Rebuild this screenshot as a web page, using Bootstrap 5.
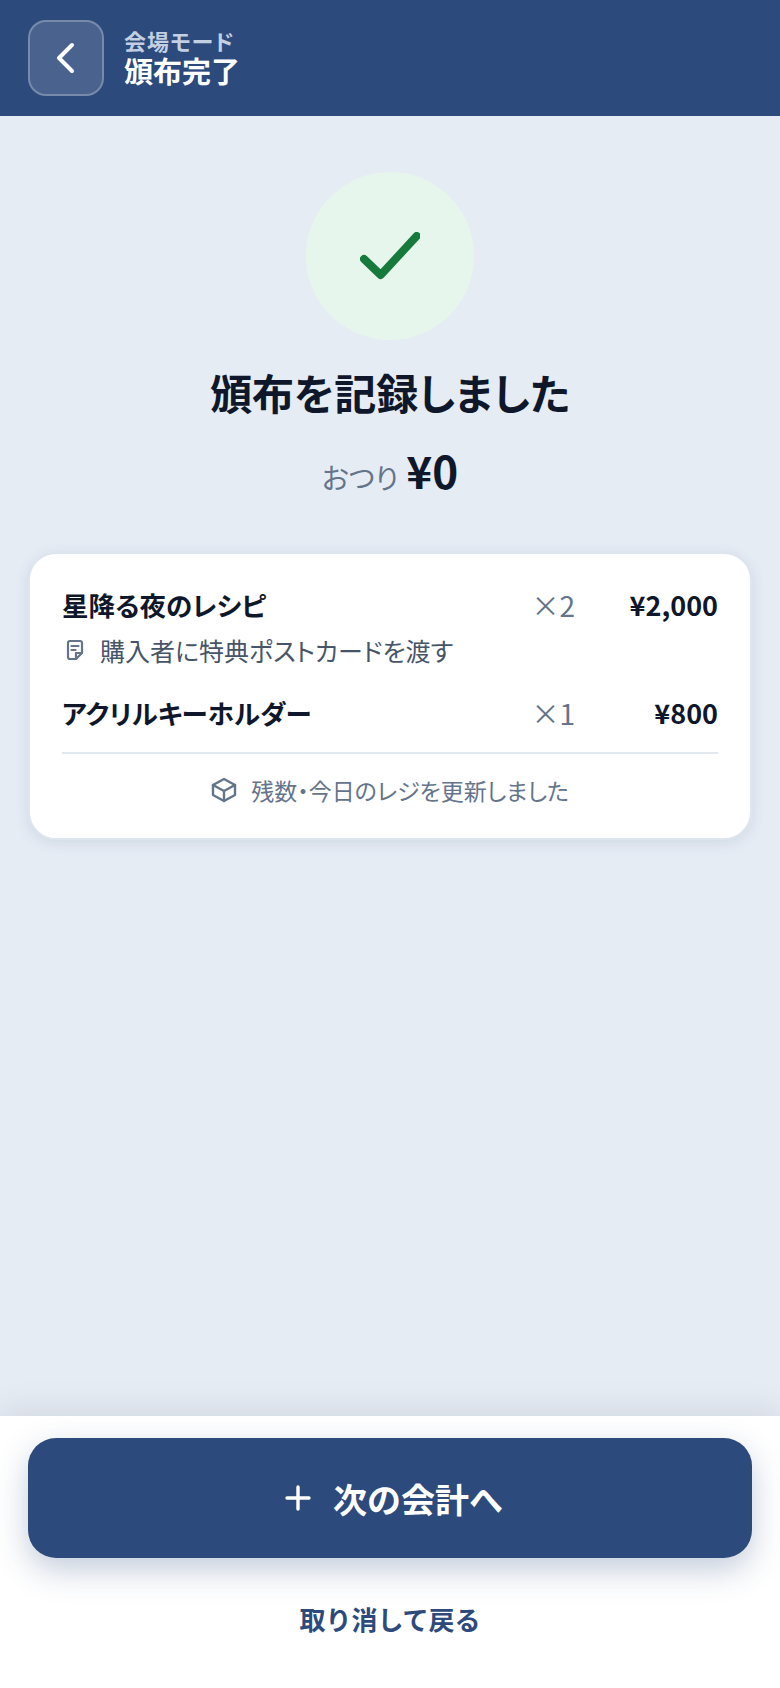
<!DOCTYPE html>
<html lang="ja">
<head>
  <meta charset="UTF-8">
  <meta name="viewport" content="width=device-width, initial-scale=1.0">
  <title>頒布完了</title>
  <link href="https://cdn.jsdelivr.net/npm/bootstrap@5.3.0/dist/css/bootstrap.min.css" rel="stylesheet">
  <style>
    body {
      font-family: "Noto Sans CJK JP", "Noto Sans", sans-serif;
      font-feature-settings: "palt";
      background-color: #e6ecf4;
      color: #0f172a;
      height: 1688px;
    }
    .top-bar {
      height: 116px;
      padding: 0 28px;
      background-color: #2c4a7c;
      gap: 20px;
    }
    .back-btn {
      width: 76px;
      height: 76px;
      padding: 0;
      border: 2px solid rgba(255, 255, 255, .25);
      border-radius: 18px;
      background-color: rgba(255, 255, 255, .14);
    }
    .bar-mode {
      margin-top: -2px;
      font-size: 22px;
      font-weight: 700;
      line-height: 26px;
      color: #c3cfe2;
      letter-spacing: 1px;
    }
    .bar-title {
      font-size: 29px;
      font-weight: 700;
      line-height: 34px;
      color: #fff;
    }
    .done-main {
      padding: 56px 28px 0;
    }
    .done-circle {
      width: 168px;
      height: 168px;
      background-color: #e6f6ec;
    }
    .done-title {
      margin: 22px 0 0;
      font-size: 42px;
      font-weight: 700;
      line-height: 60px;
    }
    .change-line {
      margin-top: 15px;
      height: 64px;
      gap: 8px;
    }
    .change-label {
      font-size: 28px;
      color: #64748b;
    }
    .change-value {
      font-size: 44px;
      font-weight: 700;
    }
    .sale-card {
      margin-top: 51px;
      padding: 31px 32px 0;
      height: 288px;
      border: 2px solid #dfe5ee;
      border-radius: 28px;
      box-shadow: 0 3px 14px rgba(44, 74, 124, .12);
    }
    .sale-name {
      font-size: 26.5px;
      font-weight: 700;
      line-height: 40px;
    }
    .sale-qty {
      width: 60px;
      font-size: 28px;
      line-height: 40px;
      text-align: right;
      color: #64748b;
    }
    .sale-price {
      width: 143px;
      font-size: 27px;
      font-weight: 700;
      line-height: 40px;
      text-align: right;
    }
    .sale-note {
      margin-top: 5px;
      margin-bottom: 23px;
      font-size: 25px;
      line-height: 40px;
      color: #475569;
      gap: 14px;
    }
    .sale-rule {
      margin: 19px 0 0;
      border-top: 2px solid #e2e8f0;
      opacity: 1;
    }
    .sale-foot {
      height: 72px;
      font-size: 23px;
      color: #64748b;
      gap: 14px;
    }
    .action-bar {
      height: 272px;
      padding: 22px 28px 0;
      background-color: #fff;
      box-shadow: 0 -4px 32px rgba(15, 23, 42, .1);
    }
    .next-btn {
      width: 100%;
      height: 120px;
      padding-left: 14px;
      border: 0;
      border-radius: 28px;
      background-color: #2c4a7c;
      color: #fff;
      font-size: 34px;
      font-weight: 700;
      gap: 22px;
      box-shadow: 0 12px 32px rgba(44, 74, 124, .28);
    }
    .cancel-btn {
      height: 60px;
      margin-top: 30px;
      border: 0;
      background: none;
      color: #2c4a7c;
      font-size: 26px;
      font-weight: 700;
    }
  </style>
</head>
<body class="d-flex flex-column">
  <header class="top-bar d-flex align-items-center">
    <button class="back-btn d-flex align-items-center justify-content-center" type="button" aria-label="戻る">
      <svg width="36" height="36" viewBox="0 0 36 36" fill="none" stroke="#fff" stroke-width="4" stroke-linecap="round" stroke-linejoin="round"><path d="M24 5 L11 18 L24 31"/></svg>
    </button>
    <div>
      <div class="bar-mode">会場モード</div>
      <div class="bar-title">頒布完了</div>
    </div>
  </header>

  <main class="done-main flex-grow-1 d-flex flex-column align-items-center">
    <div class="done-circle rounded-circle d-flex align-items-center justify-content-center">
      <svg width="60" height="48" viewBox="0 0 60 48" fill="none" stroke="#157a3c" stroke-width="8" stroke-linecap="round" stroke-linejoin="round"><path d="M4 27 L20.7 43 L56.7 4"/></svg>
    </div>
    <h1 class="done-title">頒布を記録しました</h1>
    <div class="change-line d-flex align-items-baseline">
      <span class="change-label">おつり</span>
      <span class="change-value">¥0</span>
    </div>

    <div class="sale-card card w-100">
      <div class="d-flex align-items-center">
        <div class="sale-name flex-grow-1">星降る夜のレシピ</div>
        <div class="sale-qty">×2</div>
        <div class="sale-price">¥2,000</div>
      </div>
      <div class="sale-note d-flex align-items-center">
        <svg width="24" height="24" viewBox="0 0 24 24" fill="none" stroke="#64748b" stroke-width="2.2" stroke-linejoin="round" stroke-linecap="round"><path d="M14 21 H8 a2 2 0 0 1 -2 -2 V5 a2 2 0 0 1 2 -2 H18 a2 2 0 0 1 2 2 V15 Z"/><path d="M14 21 V15 H20"/><path d="M9.5 8 H16.5 M9.5 12 H13.5"/></svg>
        <span>購入者に特典ポストカードを渡す</span>
      </div>
      <div class="d-flex align-items-center">
        <div class="sale-name flex-grow-1">アクリルキーホルダー</div>
        <div class="sale-qty">×1</div>
        <div class="sale-price">¥800</div>
      </div>
      <hr class="sale-rule">
      <div class="sale-foot d-flex align-items-center justify-content-center">
        <svg width="26" height="26" viewBox="0 0 26 26" fill="none" stroke="#64748b" stroke-width="2.4" stroke-linejoin="round" stroke-linecap="round"><path d="M13 2 L24 8 V18 L13 24 L2 18 V8 Z"/><path d="M2 8 L13 14 L24 8 M13 14 V24"/></svg>
        <span>残数・今日のレジを更新しました</span>
      </div>
    </div>
  </main>

  <footer class="action-bar d-flex flex-column align-items-center">
    <button class="next-btn d-flex align-items-center justify-content-center" type="button">
      <svg width="26" height="26" viewBox="0 0 26 26" fill="none" stroke="#fff" stroke-width="3.4" stroke-linecap="round"><path d="M13 2 V24 M2 13 H24"/></svg>
      <span>次の会計へ</span>
    </button>
    <button class="cancel-btn" type="button">取り消して戻る</button>
  </footer>

  <script src="https://cdn.jsdelivr.net/npm/bootstrap@5.3.0/dist/js/bootstrap.bundle.min.js"></script>
</body>
</html>
